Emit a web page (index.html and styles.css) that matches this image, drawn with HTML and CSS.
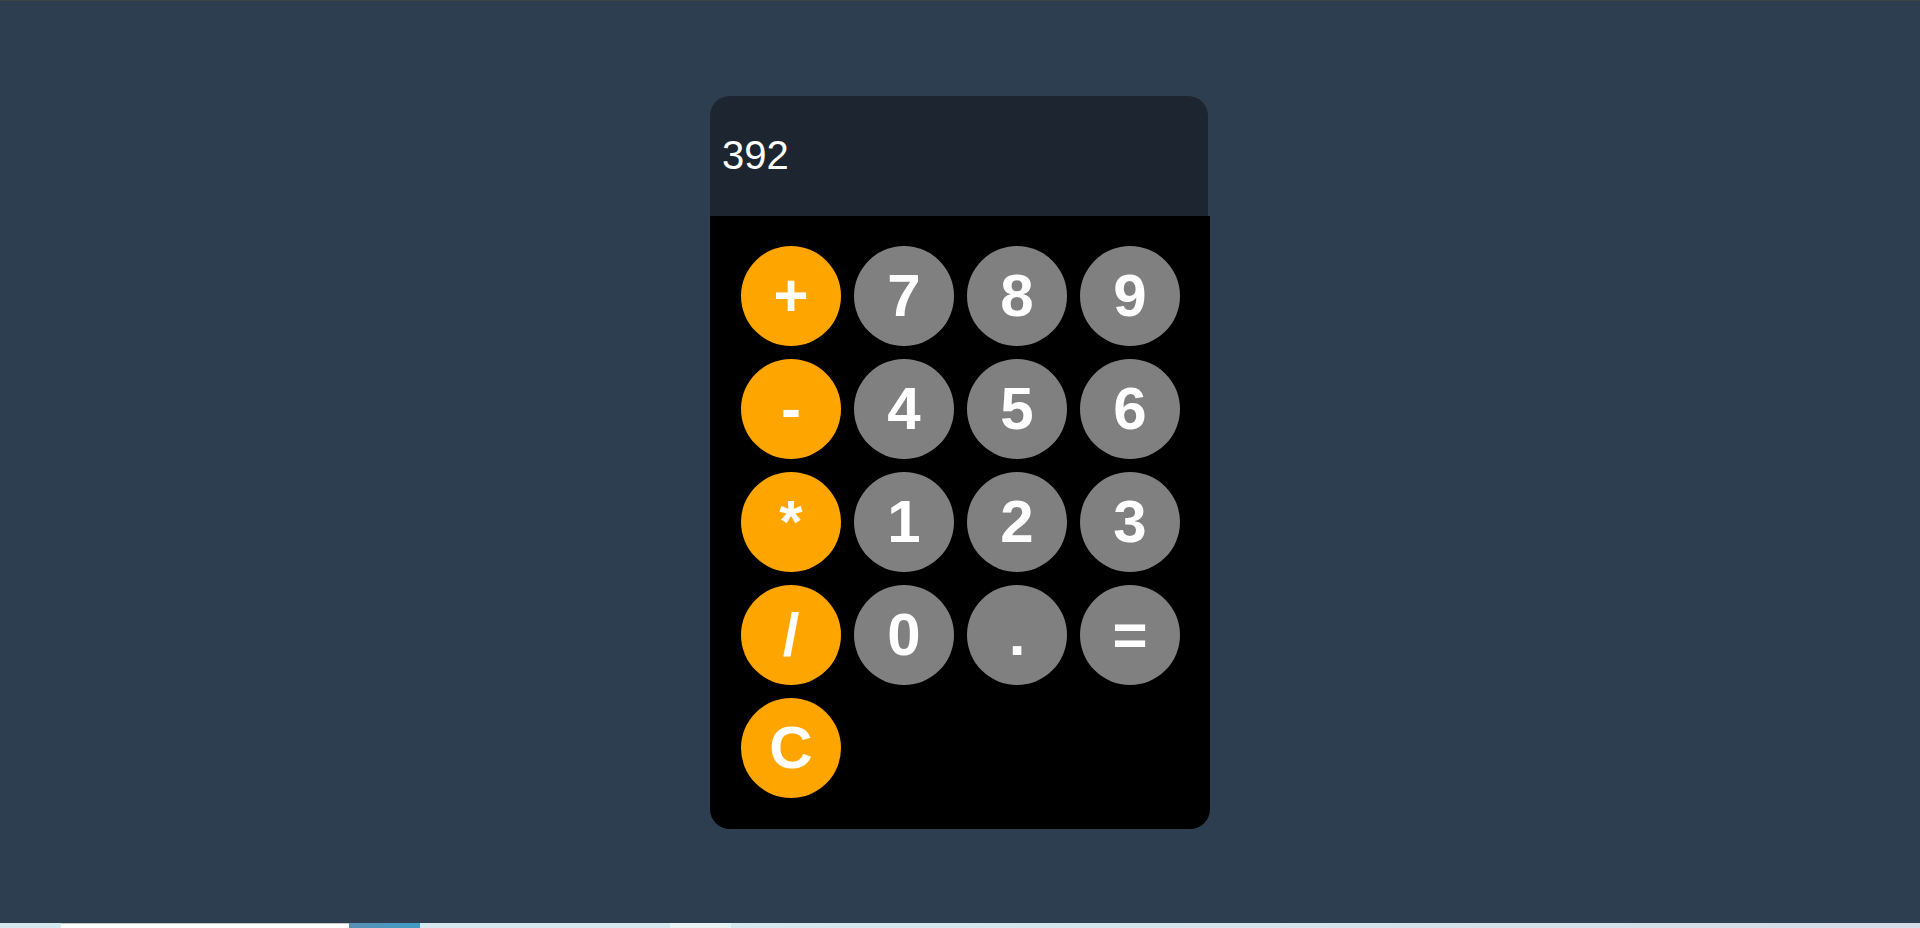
FILE: index.html
```html
<!DOCTYPE html>
<html lang="en">
<head>
<meta charset="utf-8">
<title>Calculator</title>
<link rel="stylesheet" href="styles.css">
</head>
<body>
<main class="page">
  <div class="calculator">
    <div class="display">392</div>
    <div class="keys">
      <button class="key op">+</button>
      <button class="key num">7</button>
      <button class="key num">8</button>
      <button class="key num">9</button>
      <button class="key op">-</button>
      <button class="key num">4</button>
      <button class="key num">5</button>
      <button class="key num">6</button>
      <button class="key op">*</button>
      <button class="key num">1</button>
      <button class="key num">2</button>
      <button class="key num">3</button>
      <button class="key op">/</button>
      <button class="key num">0</button>
      <button class="key num">.</button>
      <button class="key num">=</button>
      <button class="key op">C</button>
    </div>
  </div>
</main>
<footer class="strip">
  <span class="seg seg-a"></span>
  <span class="seg seg-white"></span>
  <span class="seg seg-blue"></span>
  <span class="seg seg-b"></span>
  <span class="seg seg-light"></span>
  <span class="seg seg-c"></span>
</footer>
</body>
</html>
```

FILE: styles.css
```css
* { box-sizing: border-box; }

html, body {
  margin: 0;
  padding: 0;
  height: 100%;
}

body {
  background: #2d3e50;
  font-family: "Liberation Sans", Arial, sans-serif;
  display: flex;
  flex-direction: column;
  overflow: hidden;
  border-top: 1px solid #3f4347;
}

.page {
  flex: 1;
  display: flex;
  align-items: center;
  justify-content: center;
}

.calculator {
  width: 500px;
  display: flex;
  flex-direction: column;
}

.display {
  width: 498px;
  height: 120px;
  background: #1c2530;
  border-radius: 20px 20px 0 0;
  color: #ffffff;
  font-size: 40px;
  padding: 0 12px;
  display: flex;
  align-items: center;
}

.keys {
  background: #000000;
  border-radius: 0 0 20px 20px;
  padding: 30px 30px 31px 31px;
  display: grid;
  grid-template-columns: repeat(4, 100px);
  grid-auto-rows: 100px;
  gap: 13px;
}

.key {
  width: 100px;
  height: 100px;
  border: none;
  border-radius: 50%;
  color: #ffffff;
  font-family: "Liberation Sans", Arial, sans-serif;
  font-weight: bold;
  font-size: 60px;
  padding: 0;
  display: flex;
  align-items: center;
  justify-content: center;
  line-height: 1;
}

.op { background: #ffa500; }
.num { background: #808080; }

.strip {
  height: 5px;
  flex: none;
  display: flex;
  background: #d6e8ef;
}

.seg { height: 100%; display: block; }
.seg-a { width: 61px; background: #d3e8ef; }
.seg-white { width: 288px; background: #ffffff; border-top: 1px solid #c8c8c8; }
.seg-blue { width: 71px; background: linear-gradient(90deg, #5b8fb5, #3f9cc4); }
.seg-b { width: 250px; background: #d5e9f0; }
.seg-light { width: 61px; background: #e9f4f7; }
.seg-c { flex: 1; background: linear-gradient(90deg, #d5e9f0, #d4dde9); }
```
